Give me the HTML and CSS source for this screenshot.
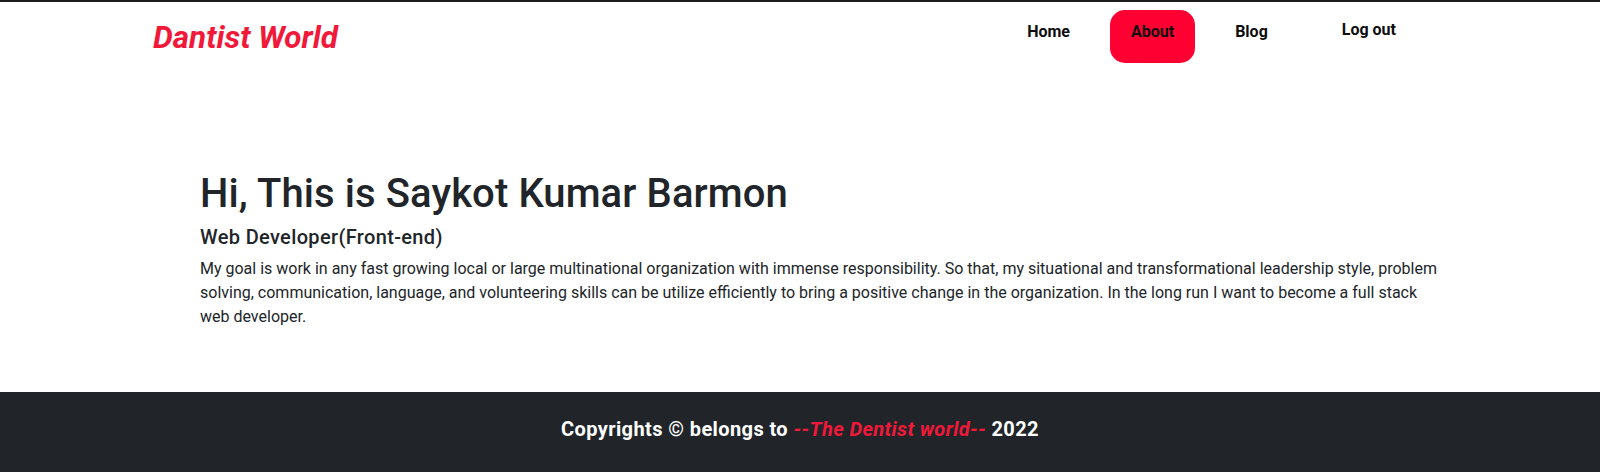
FILE: index.html
```html
<!DOCTYPE html>
<html lang="en">
<head>
<meta charset="utf-8">
<title>Dantist World - About</title>
<link rel="stylesheet" href="styles.css">
</head>
<body>
<header class="site-header">
  <div class="container header-inner">
    <a class="brand" href="#">Dantist World</a>
    <nav class="main-nav">
      <a class="nav-link" href="#">Home</a>
      <a class="nav-link active" href="#">About</a>
      <a class="nav-link" href="#">Blog</a>
      <button class="nav-link logout" type="button">Log out</button>
    </nav>
  </div>
</header>

<main class="about">
  <div class="container about-inner">
    <h1 class="about-title">Hi, This is Saykot Kumar Barmon</h1>
    <h5 class="about-role">Web Developer(Front-end)</h5>
    <p class="about-text">My goal is work in any fast growing local or large multinational organization with immense responsibility. So that, my situational and transformational leadership style, problem solving, communication, language, and volunteering skills can be utilize efficiently to bring a positive change in the organization. In the long run I want to become a full stack web developer.</p>
  </div>
</main>

<footer class="site-footer">
  <p class="footer-text">Copyrights © belongs to <span class="footer-brand">--The Dentist world--</span> 2022</p>
</footer>
</body>
</html>
```
FILE: styles.css
```css
* {
  box-sizing: border-box;
}

html, body {
  margin: 0;
  padding: 0;
}

body {
  font-family: Roboto, "Liberation Sans", sans-serif;
  font-size: 16px;
  line-height: 1.5;
  color: #212529;
  background: #fff;
}

.container {
  width: 1320px;
  margin: 0 auto;
  padding: 0 12px;
}

/* Header */
.site-header {
  border-top: 2px solid #1c1c1c;
}

.header-inner {
  display: flex;
  align-items: flex-start;
  justify-content: space-between;
  padding-top: 8px;
}

.brand {
  margin-top: 9px;
  margin-left: 1px;
  font-size: 31.4px;
  line-height: 1.2;
  font-weight: 700;
  font-style: italic;
  color: #f0193a;
  text-decoration: none;
}

.main-nav {
  display: flex;
  align-items: flex-start;
  gap: 20px;
  margin-right: 32px;
}

.nav-link {
  display: block;
  padding: 9.5px 20px 19.5px;
  font-family: Roboto, "Liberation Sans", sans-serif;
  font-size: 16px;
  line-height: 24px;
  font-weight: 700;
  color: #0d0d0d;
  text-decoration: none;
  border-radius: 15px;
  border: 0;
  background: transparent;
}

.nav-link.active {
  background: #ff0033;
  padding-left: 21px;
  padding-right: 21px;
}

.nav-link.logout {
  margin-left: 14px;
  padding-top: 7.5px;
  cursor: pointer;
}

/* About */
.about {
  padding: 107px 0 63px;
}

.about-inner {
  padding-left: 60px;
}

.about-title {
  margin: 0 0 7px;
  font-size: 40px;
  line-height: 1.2;
  font-weight: 500;
  letter-spacing: 0.1px;
}

.about-role {
  margin: 0 0 8px;
  font-size: 20px;
  line-height: 1.2;
  font-weight: 500;
  letter-spacing: 0.35px;
}

.about-text {
  margin: 0;
  font-size: 16px;
  line-height: 24px;
}

/* Footer */
.site-footer {
  background: #212529;
  padding: 25px 0 31px;
  text-align: center;
}

.footer-text {
  margin: 0;
  font-size: 20px;
  line-height: 24px;
  font-weight: 700;
  letter-spacing: 0.4px;
  color: #fff;
}

.footer-brand {
  color: #f0193a;
  font-style: italic;
}
```
